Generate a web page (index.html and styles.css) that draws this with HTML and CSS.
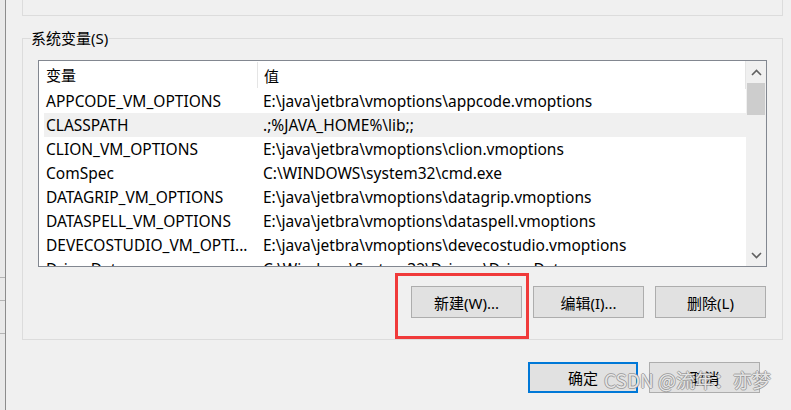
FILE: index.html
```html
<!DOCTYPE html>
<html lang="zh-CN">
<head>
  <meta charset="UTF-8">
  <title>环境变量</title>
  <link rel="stylesheet" href="styles.css">
</head>
<body>

  <div class="desk">
    <div class="behind">
      <div class="behind-line l1"></div>
      <div class="behind-line l2"></div>
      <div class="behind-line l3"></div>
    </div>

    <div class="dialog">
      <div class="group-top"></div>

      <fieldset class="group">
        <legend>系统变量(S)</legend>

        <div class="listbox">
          <div class="list">
            <div class="row head">
              <span class="name">变量</span>
              <span class="value">值</span>
            </div>
            <div class="row"><span class="name">APPCODE_VM_OPTIONS</span><span class="value">E:\java\jetbra\vmoptions\appcode.vmoptions</span></div>
            <div class="row selected"><span class="name">CLASSPATH</span><span class="value">.;%JAVA_HOME%\lib;;</span></div>
            <div class="row"><span class="name">CLION_VM_OPTIONS</span><span class="value">E:\java\jetbra\vmoptions\clion.vmoptions</span></div>
            <div class="row"><span class="name">ComSpec</span><span class="value">C:\WINDOWS\system32\cmd.exe</span></div>
            <div class="row"><span class="name">DATAGRIP_VM_OPTIONS</span><span class="value">E:\java\jetbra\vmoptions\datagrip.vmoptions</span></div>
            <div class="row"><span class="name">DATASPELL_VM_OPTIONS</span><span class="value">E:\java\jetbra\vmoptions\dataspell.vmoptions</span></div>
            <div class="row"><span class="name">DEVECOSTUDIO_VM_OPTI...</span><span class="value">E:\java\jetbra\vmoptions\devecostudio.vmoptions</span></div>
            <div class="row"><span class="name">DriverData</span><span class="value">C:\Windows\System32\Drivers\DriverData</span></div>
          </div>

          <div class="scrollbar">
            <div class="arrow">
              <svg width="11" height="7" viewBox="0 0 11 7"><path d="M1 6 L5.5 1.5 L10 6" fill="none" stroke="#606060" stroke-width="1.6"/></svg>
            </div>
            <div class="thumb"></div>
            <div class="track"></div>
            <div class="arrow">
              <svg width="11" height="7" viewBox="0 0 11 7"><path d="M1 1 L5.5 5.5 L10 1" fill="none" stroke="#606060" stroke-width="1.6"/></svg>
            </div>
          </div>
        </div>

        <div class="actions">
          <div class="marked">
            <button class="button">新建(W)...</button>
            <span class="mark"></span>
          </div>
          <button class="button">编辑(I)...</button>
          <button class="button">删除(L)</button>
        </div>
      </fieldset>

      <div class="footer">
        <button class="button primary">确定</button>
        <button class="button">取消</button>
      </div>
    </div>
  </div>

  <div class="watermark">CSDN @流年：亦梦</div>

</body>
</html>
```

FILE: styles.css
```css
body {
  margin: 0;
  height: 410px;
  overflow: hidden;
  background: #f0f0f0;
  font-family: "Noto Sans", "Noto Sans CJK SC", sans-serif;
  font-size: 15px;
  color: #000;
}

.desk {
  display: flex;
  height: 410px;
}

.behind {
  position: relative;
  width: 5px;
  background: #e9e9e9;
  border-right: 1px solid #8c8c8c;
}

.behind-line {
  position: absolute;
  left: 0;
  width: 5px;
  height: 1px;
  background: #b4b4b4;
}

.l1 { top: 277px; }
.l2 { top: 300px; }
.l3 { top: 333px; }

.dialog {
  flex: 1;
  padding: 0 8px 0 16px;
}

.group-top {
  height: 15px;
  border: 1px solid #dcdcdc;
  border-top: none;
}

.group {
  margin: 12px 0 0;
  padding: 12px 15px 21px 8px;
  border: 1px solid #dcdcdc;
}

.group legend {
  padding: 0 1px 0 0;
  line-height: 20px;
  font-size: 15px;
}

.listbox {
  display: flex;
  height: 205px;
  margin-left: 7px;
  border: 1px solid #828790;
  background: #fff;
}

.list {
  flex: 1;
  padding-left: 5px;
  overflow: hidden;
  font-size: 15.5px;
}

.row {
  display: flex;
  align-items: center;
  height: 24px;
  white-space: nowrap;
}

.row.selected {
  background: #f0f0f0;
}

.row.head {
  height: 28px;
  border-right: 1px solid #e5e5e5;
  font-size: 15px;
}

.name {
  flex: none;
  width: 211px;
  padding-left: 2px;
  overflow: hidden;
}

.head .name {
  height: 26px;
  line-height: 26px;
  border-right: 1px solid #e5e5e5;
}

.value {
  padding-left: 6px;
}

.scrollbar {
  display: flex;
  flex-direction: column;
  width: 20px;
  background: #f0f0f0;
}

.arrow {
  display: flex;
  align-items: center;
  justify-content: center;
  height: 22px;
}

.thumb {
  height: 32px;
  margin: 0 1px;
  background: #cdcdcd;
}

.track {
  flex: 1;
}

.actions {
  display: flex;
  justify-content: flex-end;
  gap: 11px;
  margin: 19px 1px 0 0;
}

.marked {
  position: relative;
  display: flex;
}

.mark {
  position: absolute;
  left: -16px;
  top: -13px;
  width: 134px;
  height: 66px;
  box-sizing: border-box;
  border: 3px solid #f03a3a;
}

.button {
  width: 111px;
  height: 32px;
  padding: 0;
  background: #e1e1e1;
  border: 1px solid #adadad;
  font-family: "Noto Sans", "Noto Sans CJK SC", sans-serif;
  font-size: 15px;
  color: #000;
}

.footer {
  display: flex;
  justify-content: flex-end;
  gap: 11px;
  margin-top: 22px;
  padding-right: 23px;
}

.footer .button {
  width: 111px;
  height: 31px;
}

.button.primary {
  width: 110px;
  border: 2px solid #0078d7;
}

.watermark {
  position: absolute;
  left: 604px;
  top: 366px;
  font-family: "Noto Sans CJK SC", sans-serif;
  font-size: 19px;
  color: rgba(255, 255, 255, 0.8);
  text-shadow: 1px 0 0 rgba(128, 128, 128, 0.6), -1px 0 0 rgba(128, 128, 128, 0.6),
    0 1px 0 rgba(128, 128, 128, 0.6), 0 -1px 0 rgba(128, 128, 128, 0.6);
}
```
